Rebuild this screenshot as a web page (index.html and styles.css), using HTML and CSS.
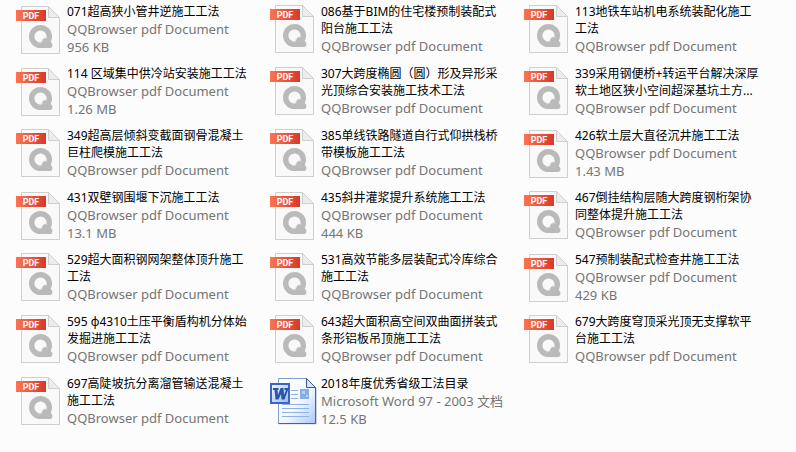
FILE: index.html
```html
<!DOCTYPE html>
<html lang="zh-CN">
<head>
  <meta charset="UTF-8">
  <meta name="viewport" content="width=device-width, initial-scale=1.0">
  <title>工法文件</title>
  <link rel="stylesheet" href="styles.css">
</head>
<body>
  <!-- 图标定义 -->
  <svg class="defs" width="0" height="0" aria-hidden="true">
    <defs>
      <linearGradient id="ribbon" x1="0" y1="0" x2="1" y2="0">
        <stop offset="0" stop-color="#fb7452"/>
        <stop offset="1" stop-color="#d9382a"/>
      </linearGradient>
      <linearGradient id="paper" x1="0" y1="0" x2="1" y2="1">
        <stop offset="0" stop-color="#ffffff"/>
        <stop offset="0.55" stop-color="#f4f8ff"/>
        <stop offset="1" stop-color="#a9c8f8"/>
      </linearGradient>
      <linearGradient id="badge" x1="0" y1="0" x2="1" y2="1">
        <stop offset="0" stop-color="#f4f8ff"/>
        <stop offset="1" stop-color="#9dbcf0"/>
      </linearGradient>
      <symbol id="pdf" viewBox="0 0 48 48">
        <path d="M5.500 .5H32.500L43.500 11.500V47.500H5.500Z" fill="#f9f9f9" stroke="#cfcfcf"/>
        <path d="M32.500 .5V11.500H43.500Z" fill="#ececec" stroke="#cfcfcf"/>
        <rect x="0" y="4" width="30" height="11" fill="url(#ribbon)"/>
        <text x="15" y="13" class="ribbon-text">PDF</text>
        <circle cx="24.500" cy="30.500" r="8.800" fill="none" stroke="#bababa" stroke-width="5.400"/>
        <path d="M22.500 42C22 39 23.500 37 26 36.500C26 31 32.500 30.500 33 35.500C37 36 37.500 41 34.500 42Z" fill="#bababa"/>
        <path d="M22 37.500C23 36.500 24.500 36 25.500 35.800C26 32.500 29 31 31.500 32.500" fill="none" stroke="#dedede" stroke-width=".7"/>
      </symbol>
      <symbol id="doc" viewBox="0 0 48 48">
        <path d="M9 46H46.500V10" fill="none" stroke="#cdd3de"/>
        <path d="M8.500 .5H36.500L45.500 9.500V45.500H8.500Z" fill="url(#paper)" stroke="#7f9cca"/>
        <path d="M45.500 9.500V45.500H8.500" fill="none" stroke="#44649c"/>
        <path d="M36.500 .5V9.500H45.500Z" fill="#d5e4fb" stroke="#3a588e"/>
        <path d="M21 12.500H28M21 16.500H28M21 20.500H28M12 26.500H39M12 30.500H39M12 34.500H39M12 38.500H39" stroke="#8fb2e4"/>
        <rect x="30" y="11" width="9" height="10" fill="#86aee6"/>
        <path d="M32 13H35V16H32ZM36 17H38V19H36Z" fill="#b7d0f4"/>
        <rect x="1" y="6" width="18" height="19" fill="url(#badge)" stroke="#3b66c4" stroke-width="2"/>
        <path d="M3 10H8.500V12H7.500L8 17L10.500 10H13.500L14 17L16 12H14.500V10H19V12H18L14.500 21.500H11.500L11 16L8.500 21.500H5.500L4.500 12H3Z" fill="#2c55ae"/>
      </symbol>
    </defs>
  </svg>

  <ul class="files">
    <li class="file">
      <svg class="icon"><use href="#pdf"/></svg>
      <div class="info">
        <div class="name">071超高狭小管井逆施工工法</div>
        <div class="meta">QQBrowser pdf Document</div>
        <div class="meta">956 KB</div>
      </div>
    </li>
    <li class="file">
      <svg class="icon"><use href="#pdf"/></svg>
      <div class="info">
        <div class="name">086基于BIM的住宅楼预制装配式阳台施工工法</div>
        <div class="meta">QQBrowser pdf Document</div>
      </div>
    </li>
    <li class="file">
      <svg class="icon"><use href="#pdf"/></svg>
      <div class="info">
        <div class="name">113地铁车站机电系统装配化施工工法</div>
        <div class="meta">QQBrowser pdf Document</div>
      </div>
    </li>

    <li class="file">
      <svg class="icon"><use href="#pdf"/></svg>
      <div class="info">
        <div class="name">114 区域集中供冷站安装施工工法</div>
        <div class="meta">QQBrowser pdf Document</div>
        <div class="meta">1.26 MB</div>
      </div>
    </li>
    <li class="file">
      <svg class="icon"><use href="#pdf"/></svg>
      <div class="info">
        <div class="name">307大跨度椭圆（圆）形及异形采光顶综合安装施工技术工法</div>
        <div class="meta">QQBrowser pdf Document</div>
      </div>
    </li>
    <li class="file">
      <svg class="icon"><use href="#pdf"/></svg>
      <div class="info">
        <div class="name">339采用钢便桥+转运平台解决深厚软土地区狭小空间超深基坑土方...</div>
        <div class="meta">QQBrowser pdf Document</div>
      </div>
    </li>

    <li class="file">
      <svg class="icon"><use href="#pdf"/></svg>
      <div class="info">
        <div class="name">349超高层倾斜变截面钢骨混凝土巨柱爬模施工工法</div>
        <div class="meta">QQBrowser pdf Document</div>
      </div>
    </li>
    <li class="file">
      <svg class="icon"><use href="#pdf"/></svg>
      <div class="info">
        <div class="name">385单线铁路隧道自行式仰拱栈桥带模板施工工法</div>
        <div class="meta">QQBrowser pdf Document</div>
      </div>
    </li>
    <li class="file">
      <svg class="icon"><use href="#pdf"/></svg>
      <div class="info">
        <div class="name">426软土层大直径沉井施工工法</div>
        <div class="meta">QQBrowser pdf Document</div>
        <div class="meta">1.43 MB</div>
      </div>
    </li>

    <li class="file">
      <svg class="icon"><use href="#pdf"/></svg>
      <div class="info">
        <div class="name">431双壁钢围堰下沉施工工法</div>
        <div class="meta">QQBrowser pdf Document</div>
        <div class="meta">13.1 MB</div>
      </div>
    </li>
    <li class="file">
      <svg class="icon"><use href="#pdf"/></svg>
      <div class="info">
        <div class="name">435斜井灌浆提升系统施工工法</div>
        <div class="meta">QQBrowser pdf Document</div>
        <div class="meta">444 KB</div>
      </div>
    </li>
    <li class="file">
      <svg class="icon"><use href="#pdf"/></svg>
      <div class="info">
        <div class="name">467倒挂结构层随大跨度钢桁架协同整体提升施工工法</div>
        <div class="meta">QQBrowser pdf Document</div>
      </div>
    </li>

    <li class="file">
      <svg class="icon"><use href="#pdf"/></svg>
      <div class="info">
        <div class="name">529超大面积钢网架整体顶升施工工法</div>
        <div class="meta">QQBrowser pdf Document</div>
      </div>
    </li>
    <li class="file">
      <svg class="icon"><use href="#pdf"/></svg>
      <div class="info">
        <div class="name">531高效节能多层装配式冷库综合施工工法</div>
        <div class="meta">QQBrowser pdf Document</div>
      </div>
    </li>
    <li class="file">
      <svg class="icon"><use href="#pdf"/></svg>
      <div class="info">
        <div class="name">547预制装配式检查井施工工法</div>
        <div class="meta">QQBrowser pdf Document</div>
        <div class="meta">429 KB</div>
      </div>
    </li>

    <li class="file">
      <svg class="icon"><use href="#pdf"/></svg>
      <div class="info">
        <div class="name">595 φ4310土压平衡盾构机分体始发掘进施工工法</div>
        <div class="meta">QQBrowser pdf Document</div>
      </div>
    </li>
    <li class="file">
      <svg class="icon"><use href="#pdf"/></svg>
      <div class="info">
        <div class="name">643超大面积高空间双曲面拼装式条形铝板吊顶施工工法</div>
        <div class="meta">QQBrowser pdf Document</div>
      </div>
    </li>
    <li class="file">
      <svg class="icon"><use href="#pdf"/></svg>
      <div class="info">
        <div class="name">679大跨度穹顶采光顶无支撑软平台施工工法</div>
        <div class="meta">QQBrowser pdf Document</div>
      </div>
    </li>

    <li class="file">
      <svg class="icon"><use href="#pdf"/></svg>
      <div class="info">
        <div class="name">697高陡坡抗分离溜管输送混凝土施工工法</div>
        <div class="meta">QQBrowser pdf Document</div>
      </div>
    </li>
    <li class="file">
      <svg class="icon"><use href="#doc"/></svg>
      <div class="info">
        <div class="name">2018年度优秀省级工法目录</div>
        <div class="meta">Microsoft Word 97 - 2003 文档</div>
        <div class="meta">12.5 KB</div>
      </div>
    </li>
  </ul>
</body>
</html>
```

FILE: styles.css
```css
body {
  margin: 0;
  background: #fcfcfc;
  font-family: "Noto Sans", "Noto Sans CJK SC", sans-serif;
  font-size: 12px;
  color: #000;
}

.defs {
  position: absolute;
}

.files {
  display: grid;
  grid-template-columns: repeat(3, 1fr);
  grid-auto-rows: minmax(62px, auto);
  align-items: start;
  list-style: none;
  margin: 0;
  padding: 3px 18px 0 16px;
}

.file {
  display: flex;
  align-items: center;
  gap: 3px;
  padding-right: 16px;
}

.icon {
  flex: none;
  width: 48px;
  height: 48px;
}

.info {
  flex: 1;
  min-width: 0;
}

.name {
  line-height: 17px;
}

.meta {
  font-size: 13px;
  line-height: 18px;
  color: #757575;
  white-space: nowrap;
}

.ribbon-text {
  font-family: Roboto, "Liberation Sans", sans-serif;
  font-size: 9px;
  font-weight: bold;
  fill: #fff;
  text-anchor: middle;
}
```
